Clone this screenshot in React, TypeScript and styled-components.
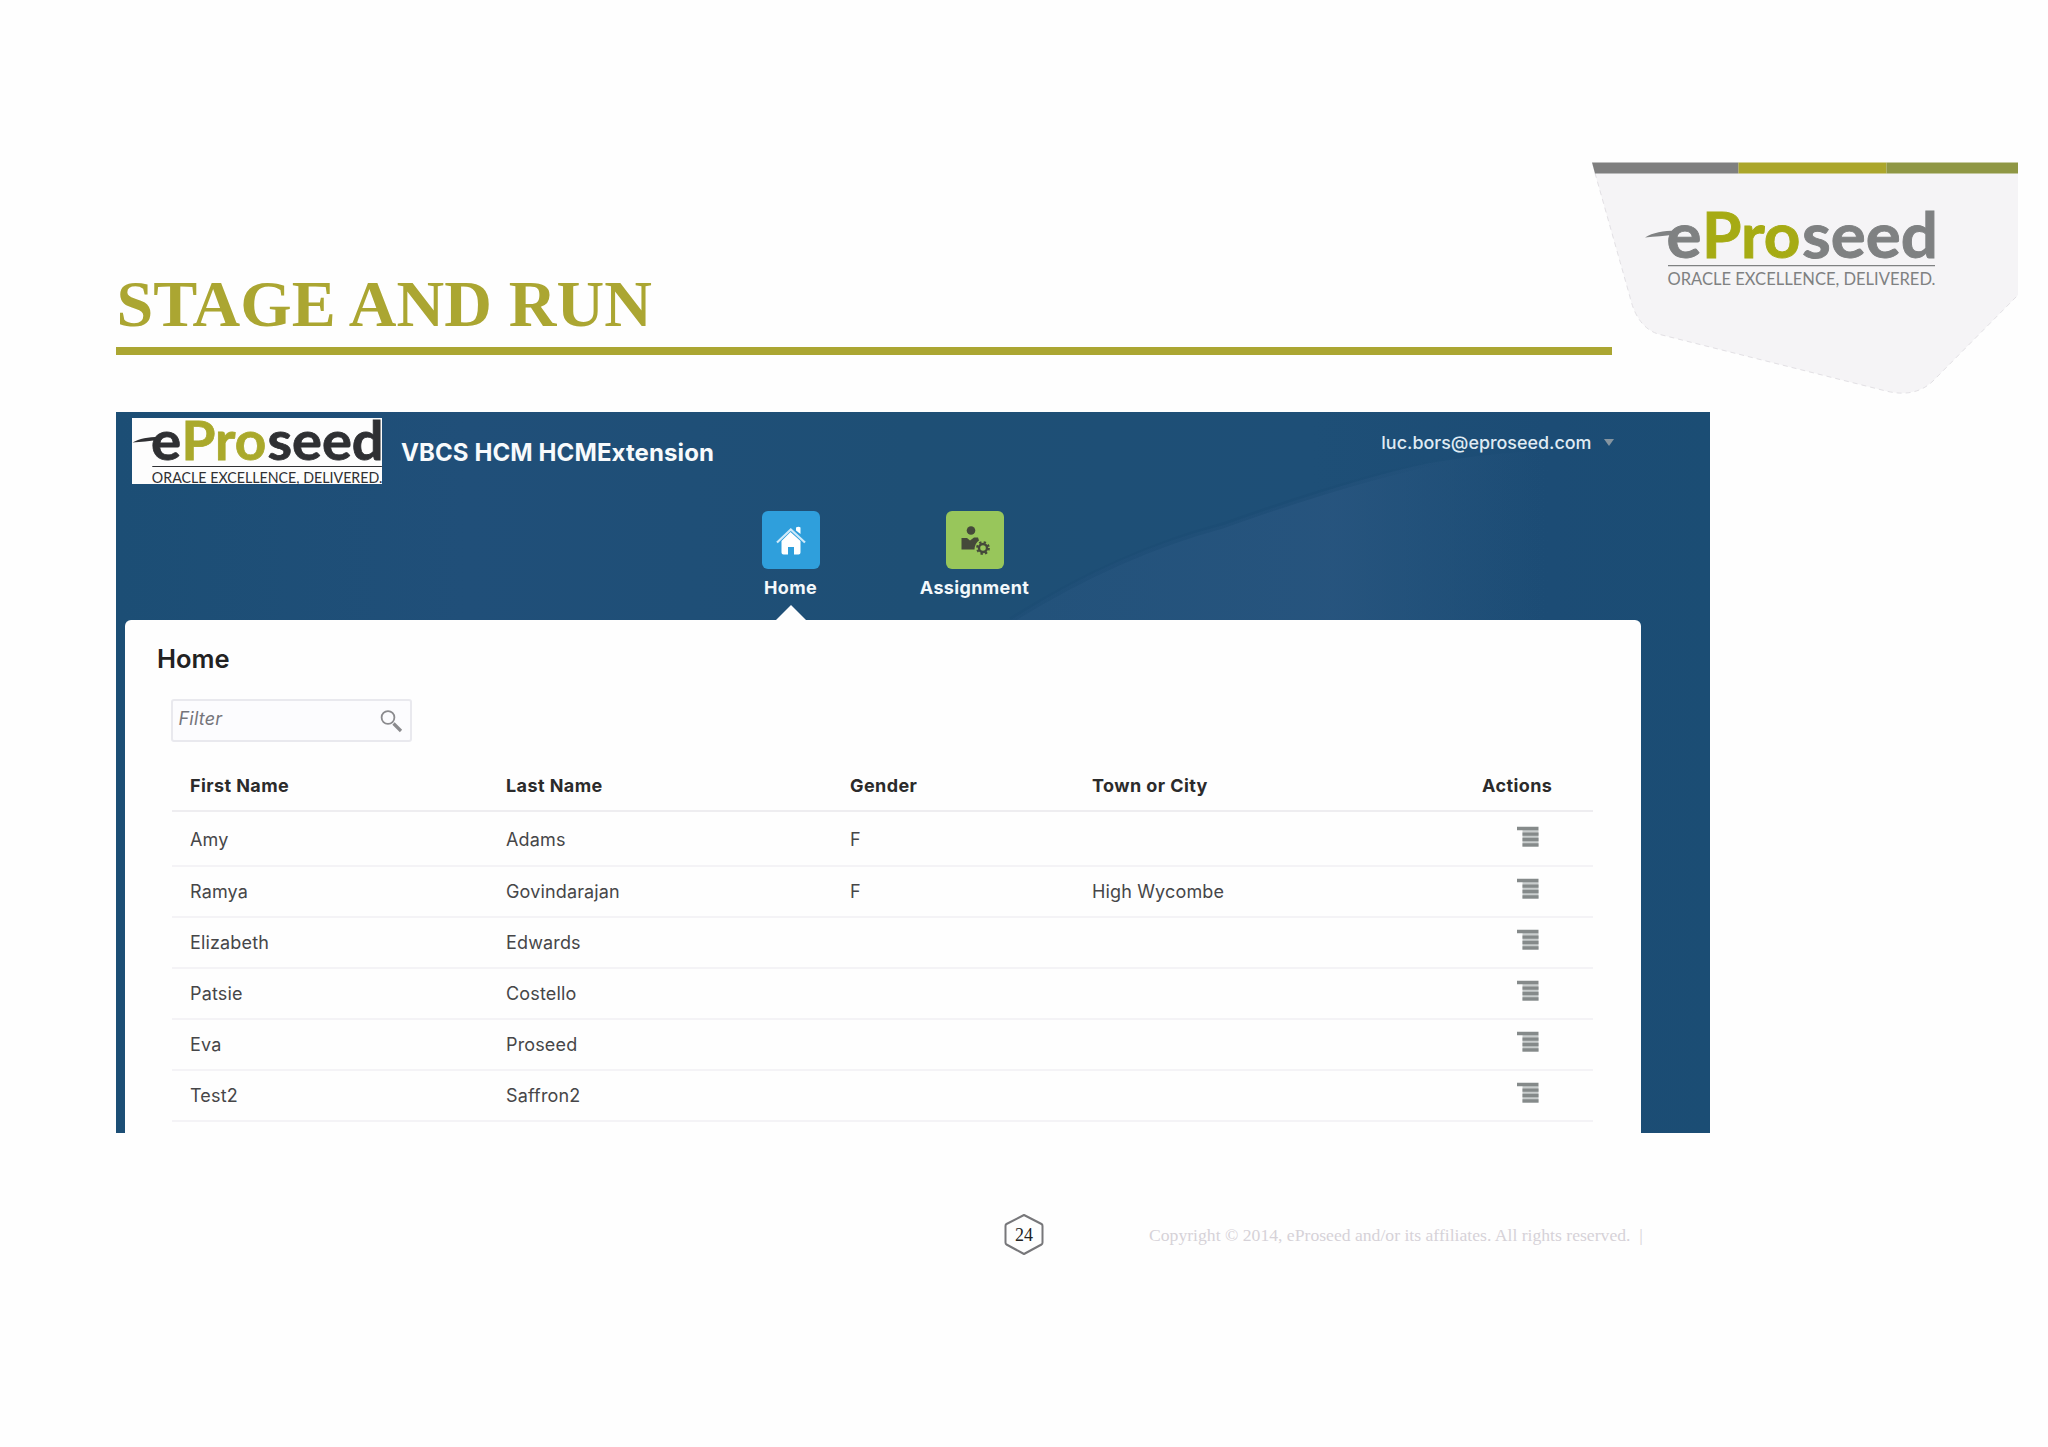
import React from "react";
import styled, { createGlobalStyle } from "styled-components";

const UI = `Inter, "Liberation Sans", sans-serif`;
const SERIF = `"Liberation Serif", serif`;
const OLIVE = "#aba632";

const Global = createGlobalStyle`
  *{box-sizing:border-box}
  body{margin:0;background:#fefefe;overflow:hidden}
`;

const Slide = styled.main`
  width: 2048px;
  height: 1447px;
  padding: 162px 30px 0 116px;
  display: flex;
  flex-direction: column;
  overflow: hidden;
`;
const Masthead = styled.header`
  height: 249.5px;
  display: flex;
  justify-content: space-between;
  flex: none;
`;
const TitleBlock = styled.div`
  width: 1496px;
  height: 193px;
  padding-top: 104px;
  border-bottom: 8px solid ${OLIVE};
  flex: none;
`;
const Title = styled.h1`
  margin: 0 0 0 0.5px;
  font: 700 66px/76px ${SERIF};
  letter-spacing: 0.1px;
  color: ${OLIVE};
  white-space: nowrap;
`;
const BadgeArt = styled.svg`
  display: block;
  width: 428px;
  height: 234px;
  margin-left: -22px;
  flex: none;
`;

const Shot = styled.section`
  position: relative;
  isolation: isolate;
  width: 1594px;
  height: 721px;
  padding: 0 69px 0 9px;
  display: flex;
  flex-direction: column;
  flex: none;
  background: linear-gradient(90deg, #1c4e75 0%, #204f79 22%, #1e4f75 50%, #1e4f77 75%, #1c4c75 90%, #1b4d74 100%);
  font-family: ${UI};
`;
const Backdrop = styled.svg`
  position: absolute;
  z-index: -1;
  left: 0;
  top: 0;
  width: 1594px;
  height: 208px;
`;
const TopBar = styled.div`
  height: 99px;
  display: flex;
  align-items: flex-start;
  flex: none;
`;
const LogoArt = styled.svg`
  display: block;
  width: 250px;
  height: 66px;
  margin: 6.5px 0 0 6.5px;
  background: #fdfdfd;
  overflow: visible;
`;
const AppName = styled.div`
  margin: 26px 0 0 19.5px;
  font-size: 24px;
  line-height: 30px;
  font-weight: 650;
  letter-spacing: 0.1px;
  color: #f7fafc;
  white-space: nowrap;
`;
const User = styled.div`
  margin: 19px 27px 0 auto;
  display: flex;
  align-items: center;
  gap: 12.5px;
  font-size: 17.9px;
  line-height: 24px;
  font-weight: 520;
  color: #dfeaf3;
`;
const Caret = styled.i`
  border: 5.5px solid transparent;
  border-top: 7px solid #8695a0;
  border-bottom: 0;
`;
const Nav = styled.nav`
  height: 109px;
  display: flex;
  padding-left: 573.5px;
  flex: none;
`;
const NavItem = styled.a`
  width: 184px;
  display: flex;
  flex-direction: column;
  align-items: center;
`;
const Tile = styled.span<{ $bg: string }>`
  width: 58px;
  height: 58px;
  border-radius: 6px;
  background: ${(p) => p.$bg};
  svg { display: block; width: 58px; height: 58px; }
`;
const NavLabel = styled.span`
  margin-top: 7px;
  font-size: 18px;
  line-height: 24px;
  font-weight: 700;
  letter-spacing: 0.35px;
  color: #f3f8fb;
`;
const Pointer = styled.i`
  margin-top: auto;
  border: 15px solid transparent;
  border-top: 0;
  border-bottom-color: #fefefe;
`;

const Panel = styled.div`
  flex: 1;
  background: #fefefe;
  border-radius: 6px 6px 0 0;
  padding: 22.5px 48px 0 46.5px;
`;
const PageTitle = styled.h2`
  margin: 0 0 0 -14.5px;
  font-size: 25.5px;
  line-height: 34px;
  font-weight: 620;
  color: #222;
`;
const FilterBox = styled.div`
  width: 241px;
  height: 43px;
  margin: 22.5px 0 0 -1px;
  padding: 0 7px 4px 6px;
  display: flex;
  align-items: center;
  justify-content: space-between;
  border: 2px solid #e9e9ee;
  border-radius: 3px;
  background: #fcfcfe;
  font-size: 18px;
  letter-spacing: 0.2px;
  font-style: italic;
  color: #75757a;
  svg { width: 24px; height: 24px; margin-top: 5px; }
`;
const Row = styled.div<{ $h: number; $head?: boolean; $top: number }>`
  height: ${(p) => p.$h}px;
  padding: ${(p) => p.$top}px 0 0 18.5px;
  display: grid;
  grid-template-columns: 316px 344px 242px 390px 1fr;
  align-items: start;
  border-bottom: 2px solid ${(p) => (p.$head ? "#eeedf0" : "#f4f3f6")};
  font-size: 18px;
  line-height: 24px;
  letter-spacing: ${(p) => (p.$head ? 0.42 : 0.15)}px;
  font-weight: ${(p) => (p.$head ? 700 : 430)};
  color: ${(p) => (p.$head ? "#2b2b2b" : "#464648")};
`;
const MenuGlyph = styled.svg`
  display: block;
  width: 22px;
  height: 22px;
  margin: -2.5px 0 0 35px;
`;

const Footer = styled.footer`
  margin: 80.5px 0 0 887.5px;
  display: flex;
  height: 42px;
  font-family: ${SERIF};
  font-size: 17.65px;
  line-height: 45px;
  flex: none;
`;
const PageNo = styled.svg`
  width: 40px;
  height: 42px;
`;
const Copyright = styled.span`
  margin-left: 105.5px;
  color: #d6d2d8;
  white-space: pre;
`;

type LogoProps = { dark: string; green: string; seedWidth: number };
const Wordmark = ({ dark, green, seedWidth }: LogoProps) => (
  <g fontFamily="Lato, 'Open Sans', sans-serif" fontWeight="700" fontSize="63" strokeWidth="0.9">
    <path d="M0 27.5C8 22.5 18 21 31 20.5L29 24.5C20 26 10 26.5 0 27.5Z" fill={dark} />
    <text x="21.5" y="48.2" fill={dark} stroke={dark} textLength="35" lengthAdjust="spacingAndGlyphs">e</text>
    <text x="57" y="48.2" fill={green} stroke={green} textLength="98.5" lengthAdjust="spacingAndGlyphs">Pro</text>
    <text x="157" y="48.2" fill={dark} stroke={dark} textLength={seedWidth} lengthAdjust="spacingAndGlyphs">seed</text>
    <path d="M23 55.7H290" stroke={dark} strokeWidth="1.2" />
    <text x="22.5" y="74.8" fill={dark} fontWeight="400" fontSize="17.6" textLength="268" lengthAdjust="spacingAndGlyphs">
      ORACLE EXCELLENCE, DELIVERED.
    </text>
  </g>
);

const Badge = () => (
  <BadgeArt viewBox="1590 162 428 234">
    <path d="M1592 163L1630 297Q1637 327 1658 334L1886 391Q1914 398 1932 382L2018 295V163Z" fill="#f5f4f6" />
    <path d="M1595 173L1630 297Q1637 327 1658 334L1886 391Q1914 398 1932 382L2018 295" fill="none" stroke="#e2e0e4" strokeWidth="1" strokeDasharray="5 4" />
    <path d="M1592 162.5H1738.5V173.5H1595Z" fill="#7f7f7f" />
    <path d="M1738.5 162.5H1886.5V173.5H1738.5Z" fill="#aba62b" />
    <path d="M1886.5 162.5H2018V173.5H1886.5Z" fill="#8f9744" />
    <g transform="translate(1645 210)"><Wordmark dark="#7f8182" green="#a6ab14" seedWidth={136} /></g>
  </BadgeArt>
);

const people = [
  ["Amy", "Adams", "F", ""],
  ["Ramya", "Govindarajan", "F", "High Wycombe"],
  ["Elizabeth", "Edwards", "", ""],
  ["Patsie", "Costello", "", ""],
  ["Eva", "Proseed", "", ""],
  ["Test2", "Saffron2", "", ""],
];

export default function App() {
  return (
    <Slide>
      <Global />
      <Masthead>
        <TitleBlock><Title>STAGE AND RUN</Title></TitleBlock>
        <Badge />
      </Masthead>
      <Shot>
        <Backdrop viewBox="0 0 1594 208">
          <defs>
            <linearGradient id="swoosh" gradientUnits="userSpaceOnUse" x1="900" y1="0" x2="1430" y2="0">
              <stop offset="0" stopColor="#26547e" stopOpacity="0.6" />
              <stop offset="0.6" stopColor="#28557f" stopOpacity="0.85" />
              <stop offset="1" stopColor="#26547e" stopOpacity="0" />
            </linearGradient>
            <linearGradient id="edge" gradientUnits="userSpaceOnUse" x1="895" y1="0" x2="1330" y2="0">
              <stop offset="0" stopColor="#1a4a72" stopOpacity="0.4" />
              <stop offset="0.7" stopColor="#1a4a72" stopOpacity="0.5" />
              <stop offset="1" stopColor="#1a4a72" stopOpacity="0" />
            </linearGradient>
          </defs>
          <path d="M895 208Q1000 140 1108 113Q1240 66 1314 51Q1380 40 1440 38V208Z" fill="url(#swoosh)" />
          <path d="M895 208Q1000 142 1108 113Q1240 66 1330 48" fill="none" stroke="url(#edge)" strokeWidth="6" />
        </Backdrop>
        <TopBar>
          <LogoArt viewBox="0 0 250 66">
            <g transform="translate(.5 1.2) scale(.86 .85)"><Wordmark dark="#2f3033" green="#aaa92c" seedWidth={135} /></g>
          </LogoArt>
          <AppName>VBCS HCM HCMExtension</AppName>
          <User>luc.bors@eproseed.com<Caret /></User>
        </TopBar>
        <Nav>
          <NavItem>
            <Tile $bg="#2f9fdc">
              <svg viewBox="0 0 58 58" fill="#fff">
                <path d="M28.5 21L38.5 30V41.5Q38.5 43.5 36.5 43.5H32V36H26V43.5H21.5Q19.5 43.5 19.5 41.5V30Z" />
                <path d="M15 31.5L28.8 18.5L43 31.5" fill="none" stroke="#cfeafa" strokeWidth="2.2" />
                <path d="M34 16.5Q36.5 15 38.5 16.5V23L34 19.5Z" />
              </svg>
            </Tile>
            <NavLabel>Home</NavLabel>
            <Pointer />
          </NavItem>
          <NavItem>
            <Tile $bg="#98c65b">
              <svg viewBox="0 0 58 58" fill="#45493a">
                <circle cx="25" cy="19.5" r="4.3" />
                <path d="M15.5 27H21L24 29.5L28 26.5H32L33 29.5Q29 32 28.5 38.5H15.5Z" />
                <circle cx="37" cy="37" r="4" fill="none" stroke="#45493a" strokeWidth="2.4" />
                <circle cx="37" cy="37" r="5.8" fill="none" stroke="#45493a" strokeWidth="2.2" strokeDasharray="2.3 2.255" />
              </svg>
            </Tile>
            <NavLabel>Assignment</NavLabel>
          </NavItem>
        </Nav>
        <Panel>
          <PageTitle>Home</PageTitle>
          <FilterBox>
            Filter
            <svg viewBox="0 0 24 24" fill="none" stroke="#8b8b8e">
              <circle cx="9" cy="8.5" r="6.4" strokeWidth="1.8" />
              <path d="M14.5 14.5L22 22" strokeWidth="3.2" />
            </svg>
          </FilterBox>
          <Row $h={70.6} $head $top={32.4}>
            <span>First Name</span><span>Last Name</span><span>Gender</span><span>Town or City</span><span>Actions</span>
          </Row>
          {people.map((p, i) => (
            <Row key={p[0]} $h={i ? 50.95 : 55.3} $top={i ? 13 : 16}>
              {p.map((c, j) => <span key={j}>{c}</span>)}
              <MenuGlyph viewBox="0 0 22 22">
                <path d="M5.5 4H21.5V21H5.5Z" fill="#c9cdcd" />
                <path d="M0 2.5H21.5M5.5 8.2H21.5M5.5 13.5H21.5M5.5 18.8H21.5" stroke="#858a8a" strokeWidth="3.3" />
              </MenuGlyph>
            </Row>
          ))}
        </Panel>
      </Shot>
      <Footer>
        <PageNo viewBox="0 0 40 42">
          <path d="M20 2L37.5 11Q38.5 11.5 38.5 13V29.5Q38.5 31 37.5 31.5L20 41L2.5 31.5Q1.5 31 1.5 29.5V13Q1.5 11.5 2.5 11Z" fill="none" stroke="#77777a" strokeWidth="2" strokeLinejoin="round" />
          <text x="20" y="27.5" textAnchor="middle" fontSize="18" fill="#222">24</text>
        </PageNo>
        <Copyright>{"Copyright © 2014, eProseed and/or its affiliates. All rights reserved.  |"}</Copyright>
      </Footer>
    </Slide>
  );
}
